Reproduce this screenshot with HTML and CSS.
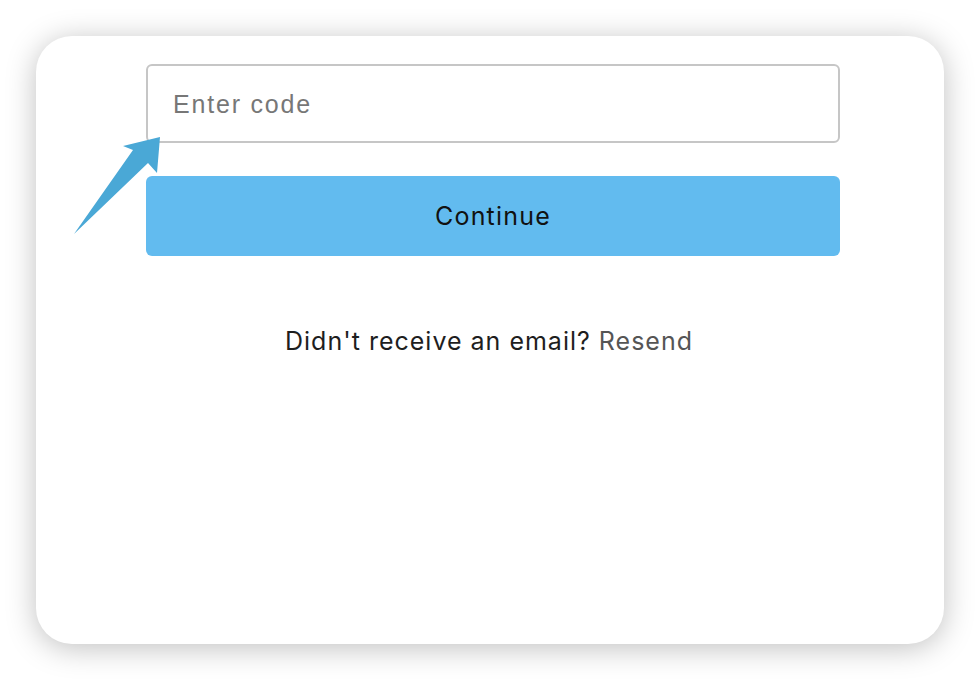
FILE: index.html
```html
<!DOCTYPE html>
<html>
<head>
<meta charset="utf-8">
<link rel="stylesheet" href="styles.css">
</head>
<body>
<div class="card">
  <div class="form">
    <input class="code" type="text" placeholder="Enter code">
    <button class="continue">Continue</button>
    <p class="resend">Didn't receive an email? <a class="resend-link">Resend</a></p>
  </div>
</div>
<svg class="arrow" width="100" height="110" viewBox="0 0 100 110">
  <polygon points="160,137 157,173 148,163 74,234 133,150 123,146" transform="translate(-70,-130)" fill="#4aa8d6"/>
</svg>
</body>
</html>
```
FILE: styles.css
```css
html, body {
  margin: 0;
  padding: 0;
  background: #ffffff;
}
body {
  width: 980px;
  height: 680px;
  position: relative;
  overflow: hidden;
  font-family: Inter, "Liberation Sans", sans-serif;
}
.card {
  position: relative;
  margin: 36px;
  width: 908px;
  height: 608px;
  background: #fff;
  border-radius: 36px;
  box-shadow: 0 4px 30px rgba(0,0,0,0.25);
  box-sizing: border-box;
  padding: 28px 104px 0 110px;
}
.form {
  display: flex;
  flex-direction: column;
  width: 694px;
}
.code {
  box-sizing: border-box;
  height: 79px;
  width: 100%;
  border: 2px solid #c6c6c6;
  border-radius: 6px;
  padding: 2px 25px 0;
  font-family: "Liberation Sans", Arial, sans-serif;
  font-size: 25px;
  letter-spacing: 1.8px;
  color: #333;
  outline: none;
}
.code::placeholder {
  color: #777;
}
.continue {
  margin-top: 33px;
  height: 80px;
  width: 100%;
  border: none;
  border-radius: 6px;
  background: #62bbef;
  color: #111;
  font-family: Inter, "Liberation Sans", sans-serif;
  font-size: 25px;
  letter-spacing: 1.2px;
}
.resend {
  margin: 70px 0 0;
  text-align: center;
  font-size: 25px;
  letter-spacing: 1px;
  color: #1e1e1e;
  padding-right: 8px;
}
.resend-link {
  color: #555;
}
.arrow {
  position: absolute;
  left: 70px;
  top: 130px;
}
```
